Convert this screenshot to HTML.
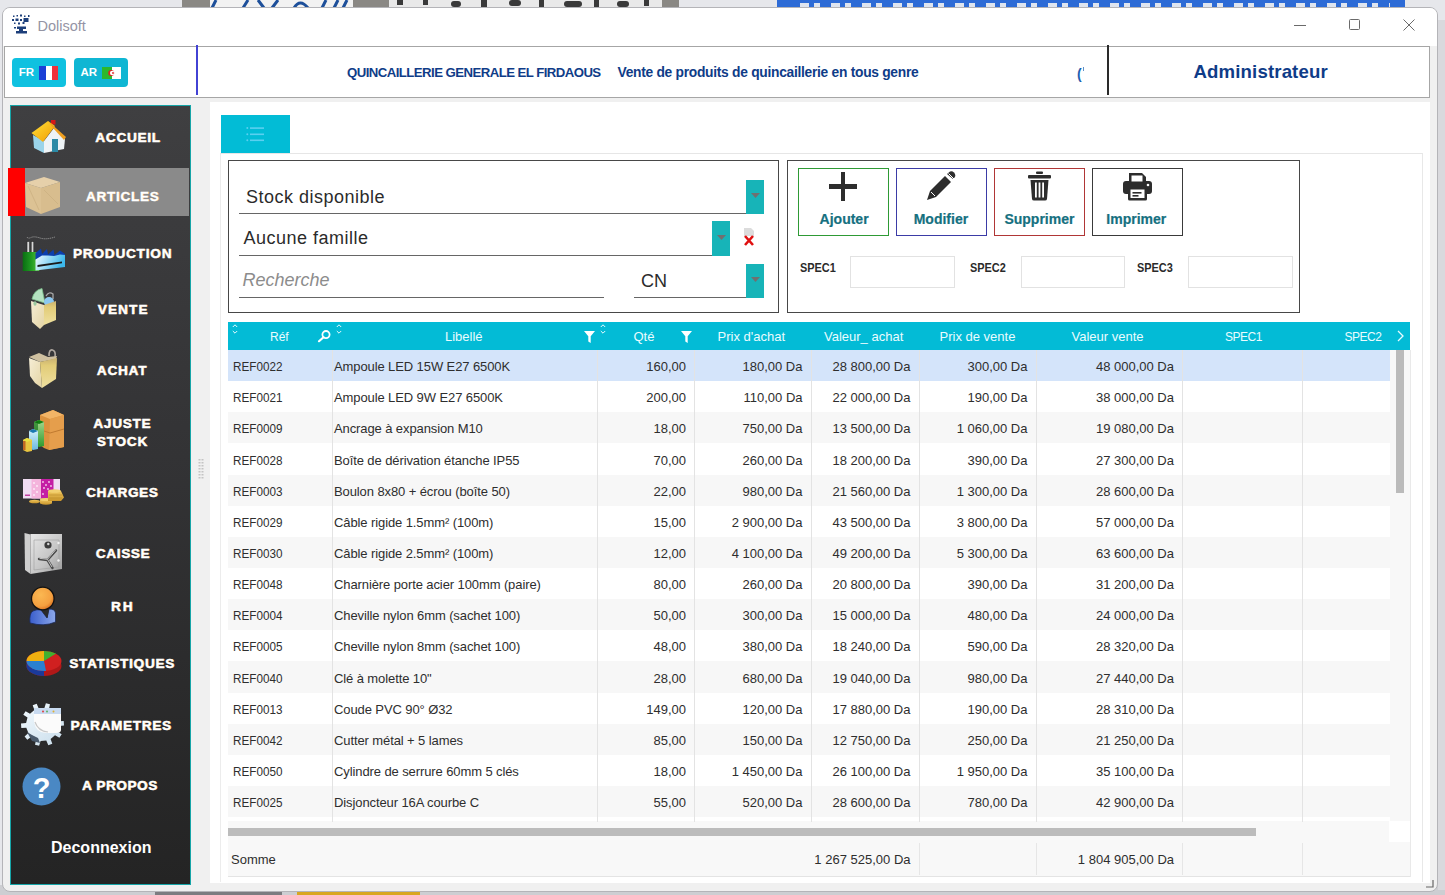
<!DOCTYPE html><html><head><meta charset="utf-8"><style>
html,body{margin:0;padding:0;width:1445px;height:895px;overflow:hidden;background:#e6e7eb;font-family:"Liberation Sans",sans-serif;}
.a{position:absolute;box-sizing:border-box;}
.t{white-space:nowrap;}
svg{position:absolute;overflow:visible}
</style></head><body>
<div class="a" style="left:182px;top:0px;width:497px;height:8px;background:#8a8884;"></div>
<div class="a" style="left:210px;top:0px;width:143px;height:8px;background:#f2f2f2;"></div>
<svg style="left:210px;top:0px" width="143" height="8" viewBox="0 0 143 8"><path d="M6 0L2 8M38 0L33 8M48 0L54 8M68 0L62 8M84 8Q90 -2 98 8M116 0L112 8M128 0L124 8M137 0L133 8" stroke="#1d4f9a" stroke-width="3" fill="none"/></svg>
<div class="a" style="left:389px;top:0px;width:273px;height:8px;background:#e9e9e9;"></div>
<svg style="left:389px;top:0px" width="273" height="8" viewBox="0 0 273 8"><g fill="#3a3a3a"><rect x="8" y="0" width="6" height="5"/><rect x="34" y="0" width="5" height="5"/><rect x="62" y="1" width="10" height="6" rx="3"/><rect x="92" y="0" width="6" height="7"/><rect x="120" y="0" width="12" height="6" rx="3"/><rect x="150" y="0" width="5" height="7"/><rect x="175" y="1" width="18" height="6" rx="3"/><rect x="205" y="0" width="5" height="7"/><rect x="228" y="1" width="12" height="6" rx="3"/><rect x="255" y="0" width="5" height="6"/></g></svg>
<div class="a" style="left:777px;top:0px;width:628px;height:8px;background:#2d6bd6;"></div>
<div class="a" style="left:800px;top:3px;width:590px;height:5px;background:repeating-linear-gradient(90deg,#f2f2f2 0 9px,#2d6bd6 9px 14px,#f2f2f2 14px 20px,#2d6bd6 20px 31px);opacity:0.9;"></div>
<div class="a" style="left:0px;top:885px;width:1445px;height:10px;background:#cdced2;"></div>
<div class="a" style="left:1438px;top:20px;width:7px;height:870px;background:#d9d9dd;"></div>
<div class="a" style="left:155px;top:891px;width:127px;height:4px;background:#7c7c80;"></div>
<div class="a" style="left:297px;top:891px;width:123px;height:4px;background:#d8a620;"></div>
<div class="a" style="left:1.5px;top:7px;width:1436px;height:885px;background:#f0f0f0;border:1px solid #b4b4b8;border-radius:8px;"></div>
<div class="a" style="left:2.5px;top:8px;width:1434px;height:38px;background:#fff;border-radius:7px 7px 0 0;"></div>
<svg style="left:11px;top:14px" width="20" height="21" viewBox="0 0 20 21"><g fill="#1d3f7a"><rect x="2" y="1.5" width="1.5" height="1.5"/><rect x="5.5" y="1" width="1.5" height="1.5"/><rect x="9" y="0.5" width="2" height="2"/><rect x="13" y="1.5" width="1.5" height="1.5"/><rect x="17" y="1" width="1.5" height="2"/><rect x="1" y="5" width="2" height="2"/><rect x="4.5" y="4.5" width="3" height="2.5"/><rect x="9" y="5" width="2" height="2"/><rect x="12.5" y="4" width="5" height="4"/><rect x="3" y="8.5" width="1.5" height="1.5"/><rect x="7" y="8.5" width="2" height="2"/><rect x="11.5" y="8" width="2" height="2"/><rect x="6" y="12.5" width="9" height="2.5"/><rect x="8" y="14.5" width="4" height="3"/><rect x="5" y="17" width="11" height="2.5"/><rect x="3" y="13" width="2" height="1.5"/></g></svg>
<div class="a t" style="left:37.5px;top:18.53px;font-size:14.5px;line-height:14.5px;color:#9494a4;font-weight:normal;font-style:normal;">Dolisoft</div>
<div class="a" style="left:1294px;top:25px;width:12px;height:1px;background:#6a6a6a;"></div>
<div class="a" style="left:1349px;top:19px;width:11px;height:11px;border:1px solid #6a6a6a;border-radius:1.5px;"></div>
<svg style="left:1403px;top:19px" width="12" height="12" viewBox="0 0 12 12"><path d="M0.5 0.5L11.5 11.5M11.5 0.5L0.5 11.5" stroke="#6a6a6a" stroke-width="1"/></svg>
<div class="a" style="left:4px;top:46px;width:1426px;height:52px;background:#fff;border:1.5px solid #a6a6a6;"></div>
<div class="a" style="left:12px;top:58px;width:54px;height:29px;background:#0fc1e0;border-radius:4px;"></div>
<div class="a t" style="left:18.8px;top:67.27px;font-size:11.5px;line-height:11.5px;color:#fff;font-weight:bold;font-style:normal;">FR</div>
<div class="a" style="left:39px;top:66px;width:7px;height:14px;background:#1a3fd6;"></div>
<div class="a" style="left:46px;top:66px;width:6px;height:14px;background:#fff;"></div>
<div class="a" style="left:52px;top:66px;width:6px;height:14px;background:#f0313a;"></div>
<div class="a" style="left:74px;top:58px;width:54px;height:29px;background:#0fb6d3;border-radius:4px;"></div>
<div class="a t" style="left:80.5px;top:67.27px;font-size:11.5px;line-height:11.5px;color:#fff;font-weight:bold;font-style:normal;">AR</div>
<div class="a" style="left:102px;top:67px;width:10px;height:12px;background:#2cb82c;"></div>
<div class="a" style="left:112px;top:67px;width:9px;height:12px;background:#fff;"></div>
<svg style="left:105px;top:68px" width="10" height="10" viewBox="0 0 10 10"><circle cx="6.2" cy="5" r="3" fill="#e02020"/><circle cx="7.2" cy="5" r="2.3" fill="#fff"/><circle cx="8" cy="5" r="0.9" fill="#e02020"/></svg>
<div class="a" style="left:196.3px;top:45px;width:1.5px;height:50px;background:#4242d4;"></div>
<div class="a t" style="left:347px;top:66.43px;font-size:13.2px;line-height:13.2px;color:#0f3c88;font-weight:bold;font-style:normal;letter-spacing:-0.55px;">QUINCAILLERIE GENERALE EL FIRDAOUS</div>
<div class="a t" style="left:617.5px;top:66.12px;font-size:13.8px;line-height:13.8px;color:#0f3c88;font-weight:bold;font-style:normal;letter-spacing:-0.28px;">Vente de produits de quincaillerie en tous genre</div>
<div class="a t" style="left:1077px;top:67.15px;font-size:14px;line-height:14px;color:#1f5fb0;font-weight:bold;font-style:normal;">(</div>
<div class="a" style="left:1082.5px;top:67px;width:1.5px;height:4px;background:#1f5fb0;opacity:0.7;"></div>
<div class="a" style="left:1107px;top:45px;width:1.5px;height:50px;background:#2a2a2a;"></div>
<div class="a t" style="left:1193.5px;top:62.76px;font-size:18.6px;line-height:18.6px;color:#0f3c88;font-weight:bold;font-style:normal;letter-spacing:0.15px;">Administrateur</div>
<div class="a" style="left:9.5px;top:105px;width:181.5px;height:779.5px;background:linear-gradient(#3f3f41 0%, #333335 45%, #242424 100%);border:1.5px solid #16a5a8;"></div>
<div class="a" style="left:8px;top:168.3px;width:16.5px;height:48px;background:#ff0000;"></div>
<div class="a" style="left:24.5px;top:168.3px;width:164.5px;height:48px;background:#8a8a8a;"></div>
<div class="a t" style="left:95.3px;top:130.87px;font-size:13.5px;line-height:13.5px;color:#ffffff;font-weight:bold;font-style:normal;letter-spacing:0.8px;-webkit-text-stroke:0.4px #fff;text-shadow:0.6px 0.4px 0 #c9904a;">ACCUEIL</div>
<div class="a t" style="left:86.1px;top:189.57px;font-size:13.5px;line-height:13.5px;color:#ffffff;font-weight:bold;font-style:normal;letter-spacing:0.75px;-webkit-text-stroke:0.4px #fff;text-shadow:0.6px 0.4px 0 #c9904a;">ARTICLES</div>
<div class="a t" style="left:73px;top:246.87px;font-size:13.5px;line-height:13.5px;color:#ffffff;font-weight:bold;font-style:normal;letter-spacing:0.85px;-webkit-text-stroke:0.4px #fff;text-shadow:0.6px 0.4px 0 #c9904a;">PRODUCTION</div>
<div class="a t" style="left:97.8px;top:303.17px;font-size:13.5px;line-height:13.5px;color:#ffffff;font-weight:bold;font-style:normal;letter-spacing:1.15px;-webkit-text-stroke:0.4px #fff;text-shadow:0.6px 0.4px 0 #c9904a;">VENTE</div>
<div class="a t" style="left:96.8px;top:364.07px;font-size:13.5px;line-height:13.5px;color:#ffffff;font-weight:bold;font-style:normal;letter-spacing:0.85px;-webkit-text-stroke:0.4px #fff;text-shadow:0.6px 0.4px 0 #c9904a;">ACHAT</div>
<div class="a t" style="left:93.3px;top:416.97px;font-size:13.5px;line-height:13.5px;color:#ffffff;font-weight:bold;font-style:normal;letter-spacing:0.8px;-webkit-text-stroke:0.4px #fff;text-shadow:0.6px 0.4px 0 #c9904a;">AJUSTE</div>
<div class="a t" style="left:96.8px;top:434.67px;font-size:13.5px;line-height:13.5px;color:#ffffff;font-weight:bold;font-style:normal;letter-spacing:0.85px;-webkit-text-stroke:0.4px #fff;text-shadow:0.6px 0.4px 0 #c9904a;">STOCK</div>
<div class="a t" style="left:86.1px;top:486.17px;font-size:13.5px;line-height:13.5px;color:#ffffff;font-weight:bold;font-style:normal;letter-spacing:0.7px;-webkit-text-stroke:0.4px #fff;text-shadow:0.6px 0.4px 0 #c9904a;">CHARGES</div>
<div class="a t" style="left:95.8px;top:547.07px;font-size:13.5px;line-height:13.5px;color:#ffffff;font-weight:bold;font-style:normal;letter-spacing:0.7px;-webkit-text-stroke:0.4px #fff;text-shadow:0.6px 0.4px 0 #c9904a;">CAISSE</div>
<div class="a t" style="left:110.9px;top:599.77px;font-size:13.5px;line-height:13.5px;color:#ffffff;font-weight:bold;font-style:normal;letter-spacing:2.2px;-webkit-text-stroke:0.4px #fff;text-shadow:0.6px 0.4px 0 #c9904a;">RH</div>
<div class="a t" style="left:69.2px;top:657.37px;font-size:13.5px;line-height:13.5px;color:#ffffff;font-weight:bold;font-style:normal;letter-spacing:0.8px;-webkit-text-stroke:0.4px #fff;text-shadow:0.6px 0.4px 0 #c9904a;">STATISTIQUES</div>
<div class="a t" style="left:70.6px;top:718.57px;font-size:13.5px;line-height:13.5px;color:#ffffff;font-weight:bold;font-style:normal;letter-spacing:0.78px;-webkit-text-stroke:0.4px #fff;text-shadow:0.6px 0.4px 0 #c9904a;">PARAMETRES</div>
<div class="a t" style="left:82.1px;top:779.47px;font-size:13.5px;line-height:13.5px;color:#ffffff;font-weight:bold;font-style:normal;letter-spacing:0.62px;-webkit-text-stroke:0.4px #fff;text-shadow:0.6px 0.4px 0 #c9904a;">A PROPOS</div>
<div class="a t" style="left:51px;top:839.76px;font-size:16px;line-height:16px;color:#fff;font-weight:bold;font-style:normal;">Deconnexion</div>
<div class="a" style="left:210px;top:102px;width:1220px;height:781px;background:#fff;"></div>
<div class="a" style="left:220px;top:153px;width:1203px;height:729px;border-left:1px solid #ececec;border-top:1px solid #e6e6e6;border-right:1px solid #e8e8e8;"></div>
<div class="a" style="left:221px;top:115px;width:69px;height:38px;background:#02bcd6;"></div>
<svg style="left:246px;top:126px" width="20" height="17" viewBox="0 0 20 17"><g fill="#5ad0f0"><rect x="4" y="1.3" width="14" height="1.6"/><rect x="4" y="7.5" width="14" height="1.6"/><rect x="4" y="13.5" width="14" height="1.6"/><circle cx="1.3" cy="2" r="1"/><circle cx="1.3" cy="8.3" r="1"/><circle cx="1.3" cy="14.3" r="1"/></g></svg>
<div class="a" style="left:228px;top:160px;width:551px;height:153px;border:1.5px solid #474747;"></div>
<div class="a" style="left:239px;top:213px;width:525px;height:1.3px;background:#666;"></div>
<div class="a" style="left:746px;top:180px;width:18px;height:34px;background:#17b4b8;"></div>
<div class="a" style="left:239px;top:255px;width:491px;height:1.3px;background:#666;"></div>
<div class="a" style="left:712px;top:221px;width:18px;height:35px;background:#17b4b8;"></div>
<div class="a" style="left:239px;top:296.5px;width:365px;height:1.3px;background:#666;"></div>
<div class="a" style="left:634px;top:296.5px;width:130px;height:1.3px;background:#666;"></div>
<div class="a" style="left:746px;top:264px;width:18px;height:34px;background:#17b4b8;"></div>
<svg style="left:750.5px;top:193px" width="9" height="5" viewBox="0 0 9 5"><path d="M0 0H9L4.5 5Z" fill="#707070"/></svg>
<svg style="left:716.5px;top:234.5px" width="9" height="5" viewBox="0 0 9 5"><path d="M0 0H9L4.5 5Z" fill="#707070"/></svg>
<svg style="left:750.5px;top:277px" width="9" height="5" viewBox="0 0 9 5"><path d="M0 0H9L4.5 5Z" fill="#707070"/></svg>
<div class="a t" style="left:246px;top:188.06px;font-size:18px;line-height:18px;color:#2b2b2b;font-weight:normal;font-style:normal;letter-spacing:0.5px;">Stock disponible</div>
<div class="a t" style="left:243.4px;top:228.56px;font-size:18px;line-height:18px;color:#2b2b2b;font-weight:normal;font-style:normal;letter-spacing:0.5px;">Aucune famille</div>
<div class="a t" style="left:242.5px;top:270.96px;font-size:18px;line-height:18px;color:#8c8c8c;font-weight:normal;font-style:italic;">Recherche</div>
<div class="a t" style="left:641px;top:271.56px;font-size:18px;line-height:18px;color:#2b2b2b;font-weight:normal;font-style:normal;">CN</div>
<svg style="left:742px;top:228px" width="14" height="19" viewBox="0 0 14 19"><path d="M2 0H9L12 3V8H2Z" fill="#dcdcdc"/><path d="M3 8L11 17M11 8L3 17" stroke="#e01010" stroke-width="2.6"/></svg>
<div class="a" style="left:787px;top:160px;width:513px;height:153px;border:1.5px solid #474747;"></div>
<div class="a" style="left:797.5px;top:167.5px;width:91px;height:68px;border:1.5px solid #2e9a35;"></div>
<div class="a t" style="left:819.6px;top:211.75px;font-size:14px;line-height:14px;color:#15707f;font-weight:bold;font-style:normal;-webkit-text-stroke:0.2px #15707f;">Ajouter</div>
<div class="a" style="left:895.8px;top:167.5px;width:91px;height:68px;border:1.5px solid #3b3ba6;"></div>
<div class="a t" style="left:913.7px;top:211.75px;font-size:14px;line-height:14px;color:#15707f;font-weight:bold;font-style:normal;-webkit-text-stroke:0.2px #15707f;">Modifier</div>
<div class="a" style="left:994px;top:167.5px;width:91px;height:68px;border:1.5px solid #b03636;"></div>
<div class="a t" style="left:1004.4px;top:211.75px;font-size:14px;line-height:14px;color:#15707f;font-weight:bold;font-style:normal;-webkit-text-stroke:0.2px #15707f;">Supprimer</div>
<div class="a" style="left:1092.3px;top:167.5px;width:91px;height:68px;border:1.5px solid #3a3a3a;"></div>
<div class="a t" style="left:1106.3px;top:211.75px;font-size:14px;line-height:14px;color:#15707f;font-weight:bold;font-style:normal;-webkit-text-stroke:0.2px #15707f;">Imprimer</div>
<div class="a" style="left:840.5px;top:172px;width:4.5px;height:28.5px;background:#2d2d2d;"></div>
<div class="a" style="left:828.5px;top:184px;width:28.5px;height:4.5px;background:#2d2d2d;"></div>
<svg style="left:926px;top:171px" width="30" height="30" viewBox="0 0 30 30"><g fill="#2d2d2d"><path d="M1 29L4 20L19 5L25 11L10 26Z"/><path d="M21 3L24 0.5Q26 -0.5 28 1.5L29 3Q30 5 28.5 6.5L27 8Z"/></g><g stroke="#fff" stroke-width="1"><path d="M5 21L9 25"/><path d="M20.3 4.3L26.3 10.3"/><path d="M22.5 2.5L28 8"/></g></svg>
<svg style="left:1028px;top:171px" width="23" height="30" viewBox="0 0 23 30"><g fill="#2d2d2d"><rect x="8" y="0.5" width="7" height="2.5" rx="1"/><rect x="0" y="4" width="23" height="3.5" rx="1"/><path d="M2.5 9H20.5L19 28Q18.8 29.5 17 29.5H6Q4.2 29.5 4 28Z"/></g><g fill="#fff"><rect x="7" y="11.5" width="1.8" height="15"/><rect x="10.6" y="11.5" width="1.8" height="15"/><rect x="14.2" y="11.5" width="1.8" height="15"/></g></svg>
<svg style="left:1123px;top:172px" width="29" height="29" viewBox="0 0 29 29"><g fill="#2d2d2d"><path d="M6 1H19L23 5V10H6Z"/><rect x="0" y="9" width="29" height="13" rx="3"/><rect x="5" y="15" width="19" height="13.5" rx="1.5"/></g><rect x="8.5" y="3.5" width="11" height="6" fill="#fff"/><rect x="7.5" y="17.5" width="14" height="8.5" fill="#fff"/><rect x="9.5" y="20" width="9" height="1.6" fill="#2d2d2d"/><rect x="9.5" y="23" width="6" height="1.6" fill="#2d2d2d"/><circle cx="25" cy="13" r="1.3" fill="#fff"/></svg>
<div class="a t" style="left:800px;top:260.80px;font-size:13px;line-height:13px;color:#2a2a2a;font-weight:bold;font-style:normal;transform:scaleX(0.84);transform-origin:0 0;">SPEC1</div>
<div class="a" style="left:850px;top:255.5px;width:104.5px;height:32px;border:1px solid #e2e2e2;"></div>
<div class="a t" style="left:970px;top:260.80px;font-size:13px;line-height:13px;color:#2a2a2a;font-weight:bold;font-style:normal;transform:scaleX(0.84);transform-origin:0 0;">SPEC2</div>
<div class="a" style="left:1020.6px;top:255.5px;width:104.5px;height:32px;border:1px solid #e2e2e2;"></div>
<div class="a t" style="left:1137.3px;top:260.80px;font-size:13px;line-height:13px;color:#2a2a2a;font-weight:bold;font-style:normal;transform:scaleX(0.84);transform-origin:0 0;">SPEC3</div>
<div class="a" style="left:1188.2px;top:255.5px;width:104.5px;height:32px;border:1px solid #e2e2e2;"></div>
<div class="a" style="left:228px;top:322px;width:1182px;height:28px;background:#03bbd6;"></div>
<div class="a" style="left:228px;top:350px;width:1182px;height:492px;background:#f8f8f8;"></div>
<div class="a" style="left:228px;top:350px;width:1162px;height:31px;background:#d4e4fa;"></div>
<div class="a" style="left:228px;top:381px;width:1162px;height:31px;background:#ffffff;"></div>
<div class="a" style="left:228px;top:412px;width:1162px;height:31px;background:#f7f7f7;"></div>
<div class="a" style="left:228px;top:443px;width:1162px;height:32px;background:#ffffff;"></div>
<div class="a" style="left:228px;top:475px;width:1162px;height:31px;background:#f7f7f7;"></div>
<div class="a" style="left:228px;top:506px;width:1162px;height:31px;background:#ffffff;"></div>
<div class="a" style="left:228px;top:537px;width:1162px;height:31px;background:#f7f7f7;"></div>
<div class="a" style="left:228px;top:568px;width:1162px;height:31px;background:#ffffff;"></div>
<div class="a" style="left:228px;top:599px;width:1162px;height:31px;background:#f7f7f7;"></div>
<div class="a" style="left:228px;top:630px;width:1162px;height:31px;background:#ffffff;"></div>
<div class="a" style="left:228px;top:661px;width:1162px;height:32px;background:#f7f7f7;"></div>
<div class="a" style="left:228px;top:693px;width:1162px;height:31px;background:#ffffff;"></div>
<div class="a" style="left:228px;top:724px;width:1162px;height:31px;background:#f7f7f7;"></div>
<div class="a" style="left:228px;top:755px;width:1162px;height:31px;background:#ffffff;"></div>
<div class="a" style="left:228px;top:786px;width:1162px;height:31px;background:#f7f7f7;"></div>
<div class="a" style="left:228px;top:817px;width:1162px;height:4px;background:#ffffff;"></div>
<div class="a" style="left:332px;top:350px;width:1px;height:472px;background:#e3e3e3;"></div>
<div class="a" style="left:597px;top:350px;width:1px;height:472px;background:#e3e3e3;"></div>
<div class="a" style="left:694px;top:350px;width:1px;height:472px;background:#e3e3e3;"></div>
<div class="a" style="left:811px;top:350px;width:1px;height:472px;background:#e3e3e3;"></div>
<div class="a" style="left:919px;top:350px;width:1px;height:472px;background:#e3e3e3;"></div>
<div class="a" style="left:1036px;top:350px;width:1px;height:472px;background:#e3e3e3;"></div>
<div class="a" style="left:1182px;top:350px;width:1px;height:472px;background:#e3e3e3;"></div>
<div class="a" style="left:1302px;top:350px;width:1px;height:472px;background:#e3e3e3;"></div>
<div class="a t" style="left:232.5px;top:360.10px;font-size:13px;line-height:13px;color:#2e2e2e;font-weight:normal;font-style:normal;transform:scaleX(0.9);transform-origin:0 0;">REF0022</div>
<div class="a t" style="left:334px;top:360.10px;font-size:13px;line-height:13px;color:#2e2e2e;font-weight:normal;font-style:normal;letter-spacing:-0.1px;">Ampoule LED 15W E27 6500K</div>
<div class="a t" style="left:606px;width:80px;text-align:right;top:360.10px;font-size:13px;line-height:13px;color:#2e2e2e;font-weight:normal;font-style:normal;">160,00</div>
<div class="a t" style="left:702.5px;width:100px;text-align:right;top:360.10px;font-size:13px;line-height:13px;color:#2e2e2e;font-weight:normal;font-style:normal;">180,00 Da</div>
<div class="a t" style="left:810.5px;width:100px;text-align:right;top:360.10px;font-size:13px;line-height:13px;color:#2e2e2e;font-weight:normal;font-style:normal;">28 800,00 Da</div>
<div class="a t" style="left:927.5px;width:100px;text-align:right;top:360.10px;font-size:13px;line-height:13px;color:#2e2e2e;font-weight:normal;font-style:normal;">300,00 Da</div>
<div class="a t" style="left:1054px;width:120px;text-align:right;top:360.10px;font-size:13px;line-height:13px;color:#2e2e2e;font-weight:normal;font-style:normal;">48 000,00 Da</div>
<div class="a t" style="left:232.5px;top:391.24px;font-size:13px;line-height:13px;color:#2e2e2e;font-weight:normal;font-style:normal;transform:scaleX(0.9);transform-origin:0 0;">REF0021</div>
<div class="a t" style="left:334px;top:391.24px;font-size:13px;line-height:13px;color:#2e2e2e;font-weight:normal;font-style:normal;letter-spacing:-0.1px;">Ampoule LED 9W E27 6500K</div>
<div class="a t" style="left:606px;width:80px;text-align:right;top:391.24px;font-size:13px;line-height:13px;color:#2e2e2e;font-weight:normal;font-style:normal;">200,00</div>
<div class="a t" style="left:702.5px;width:100px;text-align:right;top:391.24px;font-size:13px;line-height:13px;color:#2e2e2e;font-weight:normal;font-style:normal;">110,00 Da</div>
<div class="a t" style="left:810.5px;width:100px;text-align:right;top:391.24px;font-size:13px;line-height:13px;color:#2e2e2e;font-weight:normal;font-style:normal;">22 000,00 Da</div>
<div class="a t" style="left:927.5px;width:100px;text-align:right;top:391.24px;font-size:13px;line-height:13px;color:#2e2e2e;font-weight:normal;font-style:normal;">190,00 Da</div>
<div class="a t" style="left:1054px;width:120px;text-align:right;top:391.24px;font-size:13px;line-height:13px;color:#2e2e2e;font-weight:normal;font-style:normal;">38 000,00 Da</div>
<div class="a t" style="left:232.5px;top:422.38px;font-size:13px;line-height:13px;color:#2e2e2e;font-weight:normal;font-style:normal;transform:scaleX(0.9);transform-origin:0 0;">REF0009</div>
<div class="a t" style="left:334px;top:422.38px;font-size:13px;line-height:13px;color:#2e2e2e;font-weight:normal;font-style:normal;letter-spacing:-0.1px;">Ancrage à expansion M10</div>
<div class="a t" style="left:606px;width:80px;text-align:right;top:422.38px;font-size:13px;line-height:13px;color:#2e2e2e;font-weight:normal;font-style:normal;">18,00</div>
<div class="a t" style="left:702.5px;width:100px;text-align:right;top:422.38px;font-size:13px;line-height:13px;color:#2e2e2e;font-weight:normal;font-style:normal;">750,00 Da</div>
<div class="a t" style="left:810.5px;width:100px;text-align:right;top:422.38px;font-size:13px;line-height:13px;color:#2e2e2e;font-weight:normal;font-style:normal;">13 500,00 Da</div>
<div class="a t" style="left:927.5px;width:100px;text-align:right;top:422.38px;font-size:13px;line-height:13px;color:#2e2e2e;font-weight:normal;font-style:normal;">1 060,00 Da</div>
<div class="a t" style="left:1054px;width:120px;text-align:right;top:422.38px;font-size:13px;line-height:13px;color:#2e2e2e;font-weight:normal;font-style:normal;">19 080,00 Da</div>
<div class="a t" style="left:232.5px;top:453.52px;font-size:13px;line-height:13px;color:#2e2e2e;font-weight:normal;font-style:normal;transform:scaleX(0.9);transform-origin:0 0;">REF0028</div>
<div class="a t" style="left:334px;top:453.52px;font-size:13px;line-height:13px;color:#2e2e2e;font-weight:normal;font-style:normal;letter-spacing:-0.1px;">Boîte de dérivation étanche IP55</div>
<div class="a t" style="left:606px;width:80px;text-align:right;top:453.52px;font-size:13px;line-height:13px;color:#2e2e2e;font-weight:normal;font-style:normal;">70,00</div>
<div class="a t" style="left:702.5px;width:100px;text-align:right;top:453.52px;font-size:13px;line-height:13px;color:#2e2e2e;font-weight:normal;font-style:normal;">260,00 Da</div>
<div class="a t" style="left:810.5px;width:100px;text-align:right;top:453.52px;font-size:13px;line-height:13px;color:#2e2e2e;font-weight:normal;font-style:normal;">18 200,00 Da</div>
<div class="a t" style="left:927.5px;width:100px;text-align:right;top:453.52px;font-size:13px;line-height:13px;color:#2e2e2e;font-weight:normal;font-style:normal;">390,00 Da</div>
<div class="a t" style="left:1054px;width:120px;text-align:right;top:453.52px;font-size:13px;line-height:13px;color:#2e2e2e;font-weight:normal;font-style:normal;">27 300,00 Da</div>
<div class="a t" style="left:232.5px;top:484.66px;font-size:13px;line-height:13px;color:#2e2e2e;font-weight:normal;font-style:normal;transform:scaleX(0.9);transform-origin:0 0;">REF0003</div>
<div class="a t" style="left:334px;top:484.66px;font-size:13px;line-height:13px;color:#2e2e2e;font-weight:normal;font-style:normal;letter-spacing:-0.1px;">Boulon 8x80 + écrou (boîte 50)</div>
<div class="a t" style="left:606px;width:80px;text-align:right;top:484.66px;font-size:13px;line-height:13px;color:#2e2e2e;font-weight:normal;font-style:normal;">22,00</div>
<div class="a t" style="left:702.5px;width:100px;text-align:right;top:484.66px;font-size:13px;line-height:13px;color:#2e2e2e;font-weight:normal;font-style:normal;">980,00 Da</div>
<div class="a t" style="left:810.5px;width:100px;text-align:right;top:484.66px;font-size:13px;line-height:13px;color:#2e2e2e;font-weight:normal;font-style:normal;">21 560,00 Da</div>
<div class="a t" style="left:927.5px;width:100px;text-align:right;top:484.66px;font-size:13px;line-height:13px;color:#2e2e2e;font-weight:normal;font-style:normal;">1 300,00 Da</div>
<div class="a t" style="left:1054px;width:120px;text-align:right;top:484.66px;font-size:13px;line-height:13px;color:#2e2e2e;font-weight:normal;font-style:normal;">28 600,00 Da</div>
<div class="a t" style="left:232.5px;top:515.80px;font-size:13px;line-height:13px;color:#2e2e2e;font-weight:normal;font-style:normal;transform:scaleX(0.9);transform-origin:0 0;">REF0029</div>
<div class="a t" style="left:334px;top:515.80px;font-size:13px;line-height:13px;color:#2e2e2e;font-weight:normal;font-style:normal;letter-spacing:-0.1px;">Câble rigide 1.5mm² (100m)</div>
<div class="a t" style="left:606px;width:80px;text-align:right;top:515.80px;font-size:13px;line-height:13px;color:#2e2e2e;font-weight:normal;font-style:normal;">15,00</div>
<div class="a t" style="left:702.5px;width:100px;text-align:right;top:515.80px;font-size:13px;line-height:13px;color:#2e2e2e;font-weight:normal;font-style:normal;">2 900,00 Da</div>
<div class="a t" style="left:810.5px;width:100px;text-align:right;top:515.80px;font-size:13px;line-height:13px;color:#2e2e2e;font-weight:normal;font-style:normal;">43 500,00 Da</div>
<div class="a t" style="left:927.5px;width:100px;text-align:right;top:515.80px;font-size:13px;line-height:13px;color:#2e2e2e;font-weight:normal;font-style:normal;">3 800,00 Da</div>
<div class="a t" style="left:1054px;width:120px;text-align:right;top:515.80px;font-size:13px;line-height:13px;color:#2e2e2e;font-weight:normal;font-style:normal;">57 000,00 Da</div>
<div class="a t" style="left:232.5px;top:546.94px;font-size:13px;line-height:13px;color:#2e2e2e;font-weight:normal;font-style:normal;transform:scaleX(0.9);transform-origin:0 0;">REF0030</div>
<div class="a t" style="left:334px;top:546.94px;font-size:13px;line-height:13px;color:#2e2e2e;font-weight:normal;font-style:normal;letter-spacing:-0.1px;">Câble rigide 2.5mm² (100m)</div>
<div class="a t" style="left:606px;width:80px;text-align:right;top:546.94px;font-size:13px;line-height:13px;color:#2e2e2e;font-weight:normal;font-style:normal;">12,00</div>
<div class="a t" style="left:702.5px;width:100px;text-align:right;top:546.94px;font-size:13px;line-height:13px;color:#2e2e2e;font-weight:normal;font-style:normal;">4 100,00 Da</div>
<div class="a t" style="left:810.5px;width:100px;text-align:right;top:546.94px;font-size:13px;line-height:13px;color:#2e2e2e;font-weight:normal;font-style:normal;">49 200,00 Da</div>
<div class="a t" style="left:927.5px;width:100px;text-align:right;top:546.94px;font-size:13px;line-height:13px;color:#2e2e2e;font-weight:normal;font-style:normal;">5 300,00 Da</div>
<div class="a t" style="left:1054px;width:120px;text-align:right;top:546.94px;font-size:13px;line-height:13px;color:#2e2e2e;font-weight:normal;font-style:normal;">63 600,00 Da</div>
<div class="a t" style="left:232.5px;top:578.08px;font-size:13px;line-height:13px;color:#2e2e2e;font-weight:normal;font-style:normal;transform:scaleX(0.9);transform-origin:0 0;">REF0048</div>
<div class="a t" style="left:334px;top:578.08px;font-size:13px;line-height:13px;color:#2e2e2e;font-weight:normal;font-style:normal;letter-spacing:-0.1px;">Charnière porte acier 100mm (paire)</div>
<div class="a t" style="left:606px;width:80px;text-align:right;top:578.08px;font-size:13px;line-height:13px;color:#2e2e2e;font-weight:normal;font-style:normal;">80,00</div>
<div class="a t" style="left:702.5px;width:100px;text-align:right;top:578.08px;font-size:13px;line-height:13px;color:#2e2e2e;font-weight:normal;font-style:normal;">260,00 Da</div>
<div class="a t" style="left:810.5px;width:100px;text-align:right;top:578.08px;font-size:13px;line-height:13px;color:#2e2e2e;font-weight:normal;font-style:normal;">20 800,00 Da</div>
<div class="a t" style="left:927.5px;width:100px;text-align:right;top:578.08px;font-size:13px;line-height:13px;color:#2e2e2e;font-weight:normal;font-style:normal;">390,00 Da</div>
<div class="a t" style="left:1054px;width:120px;text-align:right;top:578.08px;font-size:13px;line-height:13px;color:#2e2e2e;font-weight:normal;font-style:normal;">31 200,00 Da</div>
<div class="a t" style="left:232.5px;top:609.22px;font-size:13px;line-height:13px;color:#2e2e2e;font-weight:normal;font-style:normal;transform:scaleX(0.9);transform-origin:0 0;">REF0004</div>
<div class="a t" style="left:334px;top:609.22px;font-size:13px;line-height:13px;color:#2e2e2e;font-weight:normal;font-style:normal;letter-spacing:-0.1px;">Cheville nylon 6mm (sachet 100)</div>
<div class="a t" style="left:606px;width:80px;text-align:right;top:609.22px;font-size:13px;line-height:13px;color:#2e2e2e;font-weight:normal;font-style:normal;">50,00</div>
<div class="a t" style="left:702.5px;width:100px;text-align:right;top:609.22px;font-size:13px;line-height:13px;color:#2e2e2e;font-weight:normal;font-style:normal;">300,00 Da</div>
<div class="a t" style="left:810.5px;width:100px;text-align:right;top:609.22px;font-size:13px;line-height:13px;color:#2e2e2e;font-weight:normal;font-style:normal;">15 000,00 Da</div>
<div class="a t" style="left:927.5px;width:100px;text-align:right;top:609.22px;font-size:13px;line-height:13px;color:#2e2e2e;font-weight:normal;font-style:normal;">480,00 Da</div>
<div class="a t" style="left:1054px;width:120px;text-align:right;top:609.22px;font-size:13px;line-height:13px;color:#2e2e2e;font-weight:normal;font-style:normal;">24 000,00 Da</div>
<div class="a t" style="left:232.5px;top:640.36px;font-size:13px;line-height:13px;color:#2e2e2e;font-weight:normal;font-style:normal;transform:scaleX(0.9);transform-origin:0 0;">REF0005</div>
<div class="a t" style="left:334px;top:640.36px;font-size:13px;line-height:13px;color:#2e2e2e;font-weight:normal;font-style:normal;letter-spacing:-0.1px;">Cheville nylon 8mm (sachet 100)</div>
<div class="a t" style="left:606px;width:80px;text-align:right;top:640.36px;font-size:13px;line-height:13px;color:#2e2e2e;font-weight:normal;font-style:normal;">48,00</div>
<div class="a t" style="left:702.5px;width:100px;text-align:right;top:640.36px;font-size:13px;line-height:13px;color:#2e2e2e;font-weight:normal;font-style:normal;">380,00 Da</div>
<div class="a t" style="left:810.5px;width:100px;text-align:right;top:640.36px;font-size:13px;line-height:13px;color:#2e2e2e;font-weight:normal;font-style:normal;">18 240,00 Da</div>
<div class="a t" style="left:927.5px;width:100px;text-align:right;top:640.36px;font-size:13px;line-height:13px;color:#2e2e2e;font-weight:normal;font-style:normal;">590,00 Da</div>
<div class="a t" style="left:1054px;width:120px;text-align:right;top:640.36px;font-size:13px;line-height:13px;color:#2e2e2e;font-weight:normal;font-style:normal;">28 320,00 Da</div>
<div class="a t" style="left:232.5px;top:671.50px;font-size:13px;line-height:13px;color:#2e2e2e;font-weight:normal;font-style:normal;transform:scaleX(0.9);transform-origin:0 0;">REF0040</div>
<div class="a t" style="left:334px;top:671.50px;font-size:13px;line-height:13px;color:#2e2e2e;font-weight:normal;font-style:normal;letter-spacing:-0.1px;">Clé à molette 10&quot;</div>
<div class="a t" style="left:606px;width:80px;text-align:right;top:671.50px;font-size:13px;line-height:13px;color:#2e2e2e;font-weight:normal;font-style:normal;">28,00</div>
<div class="a t" style="left:702.5px;width:100px;text-align:right;top:671.50px;font-size:13px;line-height:13px;color:#2e2e2e;font-weight:normal;font-style:normal;">680,00 Da</div>
<div class="a t" style="left:810.5px;width:100px;text-align:right;top:671.50px;font-size:13px;line-height:13px;color:#2e2e2e;font-weight:normal;font-style:normal;">19 040,00 Da</div>
<div class="a t" style="left:927.5px;width:100px;text-align:right;top:671.50px;font-size:13px;line-height:13px;color:#2e2e2e;font-weight:normal;font-style:normal;">980,00 Da</div>
<div class="a t" style="left:1054px;width:120px;text-align:right;top:671.50px;font-size:13px;line-height:13px;color:#2e2e2e;font-weight:normal;font-style:normal;">27 440,00 Da</div>
<div class="a t" style="left:232.5px;top:702.64px;font-size:13px;line-height:13px;color:#2e2e2e;font-weight:normal;font-style:normal;transform:scaleX(0.9);transform-origin:0 0;">REF0013</div>
<div class="a t" style="left:334px;top:702.64px;font-size:13px;line-height:13px;color:#2e2e2e;font-weight:normal;font-style:normal;letter-spacing:-0.1px;">Coude PVC 90° Ø32</div>
<div class="a t" style="left:606px;width:80px;text-align:right;top:702.64px;font-size:13px;line-height:13px;color:#2e2e2e;font-weight:normal;font-style:normal;">149,00</div>
<div class="a t" style="left:702.5px;width:100px;text-align:right;top:702.64px;font-size:13px;line-height:13px;color:#2e2e2e;font-weight:normal;font-style:normal;">120,00 Da</div>
<div class="a t" style="left:810.5px;width:100px;text-align:right;top:702.64px;font-size:13px;line-height:13px;color:#2e2e2e;font-weight:normal;font-style:normal;">17 880,00 Da</div>
<div class="a t" style="left:927.5px;width:100px;text-align:right;top:702.64px;font-size:13px;line-height:13px;color:#2e2e2e;font-weight:normal;font-style:normal;">190,00 Da</div>
<div class="a t" style="left:1054px;width:120px;text-align:right;top:702.64px;font-size:13px;line-height:13px;color:#2e2e2e;font-weight:normal;font-style:normal;">28 310,00 Da</div>
<div class="a t" style="left:232.5px;top:733.78px;font-size:13px;line-height:13px;color:#2e2e2e;font-weight:normal;font-style:normal;transform:scaleX(0.9);transform-origin:0 0;">REF0042</div>
<div class="a t" style="left:334px;top:733.78px;font-size:13px;line-height:13px;color:#2e2e2e;font-weight:normal;font-style:normal;letter-spacing:-0.1px;">Cutter métal + 5 lames</div>
<div class="a t" style="left:606px;width:80px;text-align:right;top:733.78px;font-size:13px;line-height:13px;color:#2e2e2e;font-weight:normal;font-style:normal;">85,00</div>
<div class="a t" style="left:702.5px;width:100px;text-align:right;top:733.78px;font-size:13px;line-height:13px;color:#2e2e2e;font-weight:normal;font-style:normal;">150,00 Da</div>
<div class="a t" style="left:810.5px;width:100px;text-align:right;top:733.78px;font-size:13px;line-height:13px;color:#2e2e2e;font-weight:normal;font-style:normal;">12 750,00 Da</div>
<div class="a t" style="left:927.5px;width:100px;text-align:right;top:733.78px;font-size:13px;line-height:13px;color:#2e2e2e;font-weight:normal;font-style:normal;">250,00 Da</div>
<div class="a t" style="left:1054px;width:120px;text-align:right;top:733.78px;font-size:13px;line-height:13px;color:#2e2e2e;font-weight:normal;font-style:normal;">21 250,00 Da</div>
<div class="a t" style="left:232.5px;top:764.92px;font-size:13px;line-height:13px;color:#2e2e2e;font-weight:normal;font-style:normal;transform:scaleX(0.9);transform-origin:0 0;">REF0050</div>
<div class="a t" style="left:334px;top:764.92px;font-size:13px;line-height:13px;color:#2e2e2e;font-weight:normal;font-style:normal;letter-spacing:-0.1px;">Cylindre de serrure 60mm 5 clés</div>
<div class="a t" style="left:606px;width:80px;text-align:right;top:764.92px;font-size:13px;line-height:13px;color:#2e2e2e;font-weight:normal;font-style:normal;">18,00</div>
<div class="a t" style="left:702.5px;width:100px;text-align:right;top:764.92px;font-size:13px;line-height:13px;color:#2e2e2e;font-weight:normal;font-style:normal;">1 450,00 Da</div>
<div class="a t" style="left:810.5px;width:100px;text-align:right;top:764.92px;font-size:13px;line-height:13px;color:#2e2e2e;font-weight:normal;font-style:normal;">26 100,00 Da</div>
<div class="a t" style="left:927.5px;width:100px;text-align:right;top:764.92px;font-size:13px;line-height:13px;color:#2e2e2e;font-weight:normal;font-style:normal;">1 950,00 Da</div>
<div class="a t" style="left:1054px;width:120px;text-align:right;top:764.92px;font-size:13px;line-height:13px;color:#2e2e2e;font-weight:normal;font-style:normal;">35 100,00 Da</div>
<div class="a t" style="left:232.5px;top:796.06px;font-size:13px;line-height:13px;color:#2e2e2e;font-weight:normal;font-style:normal;transform:scaleX(0.9);transform-origin:0 0;">REF0025</div>
<div class="a t" style="left:334px;top:796.06px;font-size:13px;line-height:13px;color:#2e2e2e;font-weight:normal;font-style:normal;letter-spacing:-0.1px;">Disjoncteur 16A courbe C</div>
<div class="a t" style="left:606px;width:80px;text-align:right;top:796.06px;font-size:13px;line-height:13px;color:#2e2e2e;font-weight:normal;font-style:normal;">55,00</div>
<div class="a t" style="left:702.5px;width:100px;text-align:right;top:796.06px;font-size:13px;line-height:13px;color:#2e2e2e;font-weight:normal;font-style:normal;">520,00 Da</div>
<div class="a t" style="left:810.5px;width:100px;text-align:right;top:796.06px;font-size:13px;line-height:13px;color:#2e2e2e;font-weight:normal;font-style:normal;">28 600,00 Da</div>
<div class="a t" style="left:927.5px;width:100px;text-align:right;top:796.06px;font-size:13px;line-height:13px;color:#2e2e2e;font-weight:normal;font-style:normal;">780,00 Da</div>
<div class="a t" style="left:1054px;width:120px;text-align:right;top:796.06px;font-size:13px;line-height:13px;color:#2e2e2e;font-weight:normal;font-style:normal;">42 900,00 Da</div>
<div class="a t" style="left:270px;top:330.84px;font-size:12px;line-height:12px;color:#eafcff;font-weight:normal;font-style:normal;">Réf</div>
<div class="a t" style="left:445px;top:330.00px;font-size:13px;line-height:13px;color:#eafcff;font-weight:normal;font-style:normal;">Libellé</div>
<div class="a t" style="left:633.5px;top:330.00px;font-size:13px;line-height:13px;color:#eafcff;font-weight:normal;font-style:normal;">Qté</div>
<div class="a t" style="left:717.5px;top:330.00px;font-size:13px;line-height:13px;color:#eafcff;font-weight:normal;font-style:normal;">Prix d'achat</div>
<div class="a t" style="left:824px;top:330.00px;font-size:13px;line-height:13px;color:#eafcff;font-weight:normal;font-style:normal;">Valeur_ achat</div>
<div class="a t" style="left:939.5px;top:330.00px;font-size:13px;line-height:13px;color:#eafcff;font-weight:normal;font-style:normal;">Prix de vente</div>
<div class="a t" style="left:1071.5px;top:330.00px;font-size:13px;line-height:13px;color:#eafcff;font-weight:normal;font-style:normal;">Valeur vente</div>
<div class="a t" style="left:1225px;top:330.84px;font-size:12px;line-height:12px;color:#eafcff;font-weight:normal;font-style:normal;letter-spacing:-0.5px;">SPEC1</div>
<div class="a t" style="left:1344.5px;top:330.84px;font-size:12px;line-height:12px;color:#eafcff;font-weight:normal;font-style:normal;letter-spacing:-0.5px;">SPEC2</div>
<svg style="left:232px;top:324px" width="6" height="10" viewBox="0 0 6 10"><path d="M0.8 3L3 0.8L5.2 3M0.8 7L3 9.2L5.2 7" fill="none" stroke="#e8fbff" stroke-width="1"/></svg>
<svg style="left:336px;top:324px" width="6" height="10" viewBox="0 0 6 10"><path d="M0.8 3L3 0.8L5.2 3M0.8 7L3 9.2L5.2 7" fill="none" stroke="#e8fbff" stroke-width="1"/></svg>
<svg style="left:600px;top:324px" width="6" height="10" viewBox="0 0 6 10"><path d="M0.8 3L3 0.8L5.2 3M0.8 7L3 9.2L5.2 7" fill="none" stroke="#e8fbff" stroke-width="1"/></svg>
<svg style="left:318px;top:330px" width="13" height="12" viewBox="0 0 13 12"><circle cx="8" cy="4.6" r="3.6" fill="none" stroke="#fff" stroke-width="1.8"/><path d="M5.5 7.2L1 11.2" stroke="#fff" stroke-width="2.2" stroke-linecap="round"/></svg>
<svg style="left:583.5px;top:330.5px" width="11" height="12" viewBox="0 0 11 12"><path d="M0 0H11L6.7 5.2V12L4.3 10.6V5.2Z" fill="#fff"/></svg>
<svg style="left:681px;top:330.5px" width="11" height="12" viewBox="0 0 11 12"><path d="M0 0H11L6.7 5.2V12L4.3 10.6V5.2Z" fill="#fff"/></svg>
<svg style="left:1397px;top:330px" width="7" height="12" viewBox="0 0 7 12"><path d="M1 1L6 6L1 11" fill="none" stroke="#e8fbff" stroke-width="1.3"/></svg>
<div class="a" style="left:1396px;top:350px;width:8px;height:143px;background:#bbbbbb;"></div>
<div class="a" style="left:1410px;top:350px;width:1px;height:527px;background:#e9e9e9;"></div>
<div class="a" style="left:1389px;top:821px;width:21px;height:21px;background:#ffffff;"></div>
<div class="a" style="left:228px;top:828px;width:1028px;height:8px;background:#bcbcbc;"></div>
<div class="a" style="left:228px;top:842px;width:1182px;height:35px;background:#f8f8f8;border-bottom:1px solid #e4e4e4;"></div>
<div class="a" style="left:919px;top:843px;width:1px;height:32px;background:#e6e6e6;"></div>
<div class="a" style="left:1036px;top:843px;width:1px;height:32px;background:#e6e6e6;"></div>
<div class="a" style="left:1182px;top:843px;width:1px;height:32px;background:#e6e6e6;"></div>
<div class="a" style="left:1302px;top:843px;width:1px;height:32px;background:#e6e6e6;"></div>
<svg style="left:1425px;top:879px" width="9" height="9" viewBox="0 0 9 9"><path d="M8 1V8H1" fill="none" stroke="#666" stroke-width="1.2"/></svg>
<svg style="left:198px;top:459px" width="6" height="19" viewBox="0 0 6 19"><g fill="#c4c4c4"><rect x="0.5" y="0" width="2" height="1.5"/><rect x="3.5" y="0" width="2" height="1.5"/><rect x="0.5" y="3" width="2" height="1.5"/><rect x="3.5" y="3" width="2" height="1.5"/><rect x="0.5" y="6" width="2" height="1.5"/><rect x="3.5" y="6" width="2" height="1.5"/><rect x="0.5" y="9" width="2" height="1.5"/><rect x="3.5" y="9" width="2" height="1.5"/><rect x="0.5" y="12" width="2" height="1.5"/><rect x="3.5" y="12" width="2" height="1.5"/><rect x="0.5" y="15" width="2" height="1.5"/><rect x="3.5" y="15" width="2" height="1.5"/><rect x="0.5" y="18" width="2" height="1.5"/><rect x="3.5" y="18" width="2" height="1.5"/></g></svg>
<div class="a t" style="left:231px;top:853.30px;font-size:13px;line-height:13px;color:#2e2e2e;font-weight:normal;font-style:normal;">Somme</div>
<div class="a t" style="left:770.5px;width:140px;text-align:right;top:853.30px;font-size:13px;line-height:13px;color:#2e2e2e;font-weight:normal;font-style:normal;">1 267 525,00 Da</div>
<div class="a t" style="left:1034px;width:140px;text-align:right;top:853.30px;font-size:13px;line-height:13px;color:#2e2e2e;font-weight:normal;font-style:normal;">1 804 905,00 Da</div>
<svg style="left:31px;top:119px" width="36" height="35" viewBox="0 0 36 35"><defs><linearGradient id="rf" x1="0" y1="0" x2="1" y2="1"><stop offset="0" stop-color="#ffe23a"/><stop offset="1" stop-color="#f29a00"/></linearGradient></defs><rect x="20" y="1" width="4.5" height="4.5" fill="#d41818"/><polygon points="2,16 13,22 13,34 3,29" fill="#9ad4ea"/><polygon points="13,22 23,9 34,20 33,30 13,34" fill="#eef3f6"/><rect x="21" y="20" width="6" height="13" fill="#2c8aa6"/><polygon points="0.5,14 17,2 24,7 12,23" fill="url(#rf)"/><polygon points="17,2 35,18 33,21 22,9" fill="#f0a020"/></svg>
<svg style="left:25px;top:177px" width="36" height="37" viewBox="0 0 36 37"><polygon points="0,6 19,0 35,5 16,11" fill="#e6d0aa"/><polygon points="0,6 16,11 16,37 1,30" fill="#dcc294"/><polygon points="16,11 35,5 35,30 16,37" fill="#d8bd8e"/><path d="M3 9L14 33M19 13L33 27" stroke="#c9ad7e" stroke-width="1" opacity="0.6"/></svg>
<svg style="left:18px;top:232px" width="52" height="42" viewBox="0 0 52 42"><defs><linearGradient id="gr" x1="0" y1="0" x2="1" y2="0"><stop offset="0" stop-color="#0a6e12"/><stop offset="0.5" stop-color="#1f9a22"/><stop offset="1" stop-color="#58c03a"/></linearGradient><linearGradient id="bl" x1="0" y1="0" x2="1" y2="0.3"><stop offset="0" stop-color="#f4fbff"/><stop offset="1" stop-color="#3cb8ec"/></linearGradient></defs><path d="M9 5Q10 7 13 5.5T22 6T37 5" stroke="#9a9a9a" stroke-width="1" fill="none" stroke-dasharray="1.2 0.8"/><rect x="9" y="9.5" width="2.6" height="12" fill="#d8d8d8" stroke="#2a2a2a" stroke-width="0.6"/><rect x="13.2" y="9.5" width="2.6" height="12" fill="#d8d8d8" stroke="#2a2a2a" stroke-width="0.6"/><rect x="4.7" y="20" width="16.5" height="19" fill="url(#gr)"/><polygon points="17.5,21 23,16.5 24,22 29,17 30,22.5 35.5,17.5 36.5,23 42,18.5 47,22 47,27 17.5,28" fill="#0c3fae"/><polygon points="17.5,27.5 24,23.5 30,23.5 36,24 42,22.5 47,23 47,35 17.5,38.5" fill="url(#bl)"/><polygon points="19.5,33 44,29.5 44,31.3 19.5,35" fill="#1a1a1a"/></svg>
<svg style="left:22px;top:284px" width="44" height="110" viewBox="0 0 44 110"><defs><linearGradient id="bgl" x1="0" y1="0" x2="1" y2="1"><stop offset="0" stop-color="#f6eed6"/><stop offset="1" stop-color="#e4d4a4"/></linearGradient><linearGradient id="bgr" x1="0" y1="0" x2="0" y2="1"><stop offset="0" stop-color="#c8b070"/><stop offset="0.25" stop-color="#e2cc78"/><stop offset="1" stop-color="#efe0a0"/></linearGradient></defs><path d="M10 15Q12 6 20 4.5L23 19Z" fill="#b4e2c0" stroke="#7cc08c" stroke-width="0.8"/><path d="M24 12Q27 7 31 10L31 15" stroke="#a8a8a8" stroke-width="1.3" fill="none"/><circle cx="27" cy="18" r="5" fill="#8cc8f0"/><polygon points="9,17 22,21 22,41 18,45 10,38" fill="url(#bgl)"/><polygon points="22,21 34,17 34,36 22,41" fill="url(#bgr)"/><ellipse cx="13" cy="19.5" rx="1.6" ry="2.2" fill="#9cc8a0"/><path d="M27 72Q27 65 30.5 66Q34 67 33 73" stroke="#b0a8a0" stroke-width="1.6" fill="none"/><polygon points="7,73 17,69 26,73 35,72 34,75 18,78" fill="#cfc0a0"/><polygon points="7,74 18,78 20,104 13,99 8,92" fill="url(#bgl)"/><polygon points="18,78 35,74 34,95 20,104" fill="url(#bgr)"/></svg>
<svg style="left:18px;top:405px" width="52" height="50" viewBox="0 0 52 50"><defs><linearGradient id="gb" x1="0" y1="0" x2="0" y2="1"><stop offset="0" stop-color="#a8d890"/><stop offset="1" stop-color="#2e9a2e"/></linearGradient><linearGradient id="bb" x1="0" y1="0" x2="0" y2="1"><stop offset="0" stop-color="#d8f2fa"/><stop offset="1" stop-color="#6ab8e0"/></linearGradient></defs><polygon points="22,10 35,5 46,10 46,42 31,45 26,43 22,40" fill="#dc923e"/><polygon points="22,10 35,5 46,10 32,14" fill="#f2b466"/><polygon points="32,14 46,10 46,42 31,45" fill="#e59e4c"/><path d="M26 26L32 28L46 24" stroke="#c07a30" stroke-width="1" fill="none"/><polygon points="16,17 21,15 26,17 26,41 21,42 16,40" fill="url(#gb)"/><polygon points="16,17 21,15 26,17 21,19" fill="#0e8010"/><rect x="16" y="17" width="4" height="8" fill="#0a6a10" opacity="0.6"/><polygon points="11,26 15,24 20,26 20,44 15,45 11,43" fill="url(#bb)"/><polygon points="11,26 15,24 20,26 15,28" fill="#1a78b0"/><polygon points="5,35 9,33 14,35 14,46 9,47 5,45" fill="#e8c440"/><polygon points="5,35 9,33 14,35 9,37" fill="#e8e040"/><rect x="5" y="36" width="2.5" height="9" fill="#b04018" opacity="0.7"/></svg>
<svg style="left:18px;top:474px" width="52" height="38" viewBox="0 0 52 38"><defs><linearGradient id="cn" x1="0" y1="0" x2="0" y2="1"><stop offset="0" stop-color="#f0c860"/><stop offset="1" stop-color="#c8942a"/></linearGradient></defs><rect x="5" y="5" width="37" height="19.5" fill="#f0dcf2"/><rect x="13.5" y="5" width="9.5" height="19.5" fill="#f4b4dc"/><rect x="23" y="5" width="12.5" height="19.5" fill="#c41ea4"/><rect x="7" y="20.5" width="5" height="1.5" fill="#c040a0"/><circle cx="16" cy="9" r="0.9" fill="#fff" opacity="0.8"/><circle cx="19" cy="12" r="0.9" fill="#fff" opacity="0.8"/><circle cx="16" cy="15" r="0.9" fill="#fff" opacity="0.8"/><circle cx="19" cy="18" r="0.9" fill="#fff" opacity="0.8"/><circle cx="16" cy="21" r="0.9" fill="#fff" opacity="0.8"/><circle cx="25" cy="8" r="0.9" fill="#fff" opacity="0.8"/><circle cx="28" cy="11" r="0.9" fill="#fff" opacity="0.8"/><circle cx="31" cy="8" r="0.9" fill="#fff" opacity="0.8"/><circle cx="26" cy="14" r="0.9" fill="#fff" opacity="0.8"/><circle cx="30" cy="15" r="0.9" fill="#fff" opacity="0.8"/><circle cx="25" cy="20" r="0.9" fill="#fff" opacity="0.8"/><circle cx="33" cy="12" r="0.9" fill="#fff" opacity="0.8"/><ellipse cx="16.5" cy="27.5" rx="5.5" ry="1.8" fill="url(#cn)"/><path d="M22 25.5H34V29.5Q28 32 22 29.5Z" fill="url(#cn)"/><ellipse cx="28" cy="25.5" rx="6" ry="1.6" fill="#f2d070"/><path d="M30 17H43L46 23.5L43 27H30Z" fill="url(#cn)"/><ellipse cx="36.5" cy="17" rx="6.5" ry="1.8" fill="#f2d070"/><path d="M31 21H45M31 24H44" stroke="#b88a28" stroke-width="0.6"/></svg>
<svg style="left:20px;top:528px" width="48" height="50" viewBox="0 0 48 50"><defs><linearGradient id="sf" x1="0" y1="0" x2="1" y2="1"><stop offset="0" stop-color="#e8e8e8"/><stop offset="0.6" stop-color="#c4c4c4"/><stop offset="1" stop-color="#9a9a9a"/></linearGradient></defs><polygon points="4.5,5 10.5,6.5 10.5,46 5,42" fill="#cfcfcf"/><polygon points="10.5,6 42,6 42,41 10.5,46" fill="url(#sf)"/><path d="M14 12H39V39L14 42Z" fill="none" stroke="#9a9a9a" stroke-width="0.8" opacity="0.7"/><circle cx="28" cy="17" r="3.6" fill="#3c3c3c"/><circle cx="28.3" cy="16" r="1.2" fill="#d8d8d8"/><path d="M27.5 32L19 31M27.5 32L36 22.5M27.5 32L32.5 40" stroke="#4a4a4a" stroke-width="2.4" stroke-linecap="round"/><path d="M27.5 31.3L19.5 30.3M27.5 31.3L35.5 22M27.5 31.3L32 39" stroke="#d0d0d0" stroke-width="0.9"/><circle cx="38.5" cy="15" r="1.2" fill="#f0f0f0"/><circle cx="38.5" cy="32.5" r="1.2" fill="#f0f0f0"/></svg>
<svg style="left:20px;top:580px" width="44" height="50" viewBox="0 0 44 50"><defs><radialGradient id="hd" cx="0.4" cy="0.35" r="0.7"><stop offset="0" stop-color="#fbb852"/><stop offset="0.7" stop-color="#f4a040"/><stop offset="1" stop-color="#d86a1a"/></radialGradient><linearGradient id="bd" x1="0" y1="0" x2="1" y2="0"><stop offset="0" stop-color="#3a5ecc"/><stop offset="1" stop-color="#8ca8ea"/></linearGradient></defs><path d="M10 43Q9 33 13 31Q17 29 21 30L27 38L29 29Q35 29 35.5 33L35.5 42Q24 47 10 43Z" fill="url(#bd)" stroke="#1a2a5a" stroke-width="0.8"/><polygon points="21,30 29,29 27.5,38" fill="#2a2a2a"/><circle cx="22.8" cy="18.5" r="11.3" fill="url(#hd)" stroke="#111" stroke-width="1.3"/></svg>
<svg style="left:26px;top:649px" width="36" height="28" viewBox="0 0 36 28"><ellipse cx="18" cy="17" rx="17.5" ry="10" fill="#b01818"/><path d="M0.5 12V17A17.5 10 0 0 0 18 27V22Z" fill="#1a3a9a"/><ellipse cx="18" cy="12" rx="17.5" ry="10" fill="#d02020"/><path d="M18 12L18 2A17.5 10 0 0 0 0.5 12Z" fill="#f0b010"/><path d="M18 12L18 2A17.5 10 0 0 1 30 4.5Z" fill="#40b030"/><path d="M18 12L0.5 12A17.5 10 0 0 0 20 22Z" fill="#2a80d0"/></svg>
<svg style="left:18px;top:700px" width="50" height="48" viewBox="0 0 50 48"><defs><linearGradient id="gw" x1="0" y1="0" x2="1" y2="1"><stop offset="0" stop-color="#f4fbff"/><stop offset="1" stop-color="#c8dcea"/></linearGradient></defs><path d="M40.7 21.2L45.7 21.1L46.0 25.4L40.9 25.9L39.5 31.4L43.7 34.3L41.4 37.8L37.0 35.3L32.6 38.9L34.3 43.7L30.3 45.2L28.3 40.6L22.6 40.9L21.1 45.7L17.0 44.7L18.1 39.7L13.3 36.7L9.3 39.7L6.6 36.4L10.4 33.1L8.3 27.8L3.3 27.9L3.0 23.6L8.1 23.1L9.5 17.6L5.3 14.7L7.6 11.2L12.0 13.7L16.4 10.1L14.7 5.3L18.7 3.8L20.7 8.4L26.4 8.1L27.9 3.3L32.0 4.3L30.9 9.3L35.7 12.3L39.7 9.3L42.4 12.6L38.6 15.9Z" fill="url(#gw)"/><path d="M9 32L14 41L22 43L20 38L14 35Z" fill="#4a5a6c"/><path d="M16 8H43V30Q43 33 38 33H28Q18 33 16 22Z" fill="#fbfbfb"/><rect x="16" y="8" width="27" height="6" fill="#c8daf0"/><circle cx="25" cy="11.5" r="1" fill="#e04040"/><circle cx="29" cy="11.5" r="1" fill="#60b060"/><circle cx="35.5" cy="11.5" r="1" fill="#e0b030"/><path d="M17 22Q20 31 30 32" stroke="#c8c8c8" stroke-width="1.2" fill="none"/></svg>
<svg style="left:22px;top:767px" width="39" height="39" viewBox="0 0 39 39"><circle cx="19.5" cy="19.5" r="19" fill="#4a88c4"/><text x="19.5" y="31" text-anchor="middle" font-size="29" font-weight="bold" fill="#fff" font-family="Liberation Sans">?</text></svg>
</body></html>
